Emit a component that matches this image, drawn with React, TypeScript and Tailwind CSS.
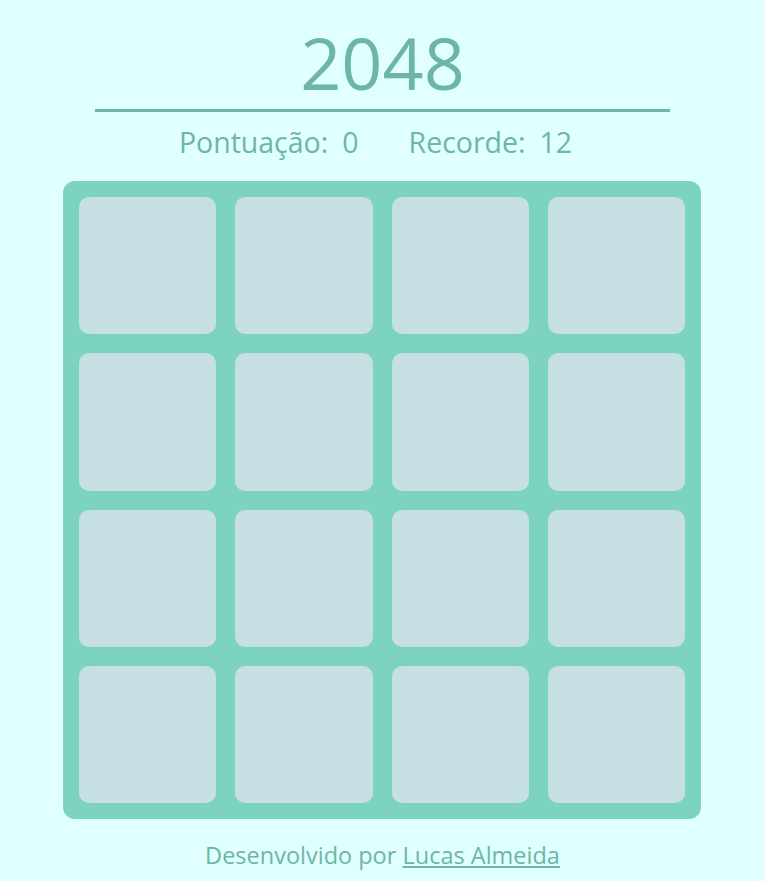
import React from "react";

export default function App() {
  const tiles = Array.from({ length: 16 });
  return (
    <div
      className="min-h-[881px] w-full bg-[#e0ffff] text-[#6db6a6] flex flex-col items-center"
      style={{ fontFamily: '"Open Sans", "Noto Sans", sans-serif' }}
    >
      <h1 className="mt-[22px] text-[72px] leading-[80px] font-normal">2048</h1>
      <div className="mt-[7px] w-[575px] h-[3px] bg-[#6db6a6]" />
      <div className="mt-[12px] mr-[14px] flex gap-[50px] text-[28.5px] leading-[36px]">
        <div className="flex gap-[14px]">
          <span>Pontuação:</span>
          <span>0</span>
        </div>
        <div className="flex gap-[14px]">
          <span>Recorde:</span>
          <span>12</span>
        </div>
      </div>
      <div className="mt-[21px] mr-[1px] w-[638px] h-[638px] rounded-[12px] bg-[#7bd3c0] p-[16px] grid grid-cols-4 grid-rows-4 gap-[19px]">
        {tiles.map((_, i) => (
          <div key={i} className="rounded-[10px] bg-[#c5dfe3]" />
        ))}
      </div>
      <p className="mt-[21px] text-[23.5px] leading-[30px]">
        Desenvolvido por <a className="underline" href="#">Lucas Almeida</a>
      </p>
    </div>
  );
}
